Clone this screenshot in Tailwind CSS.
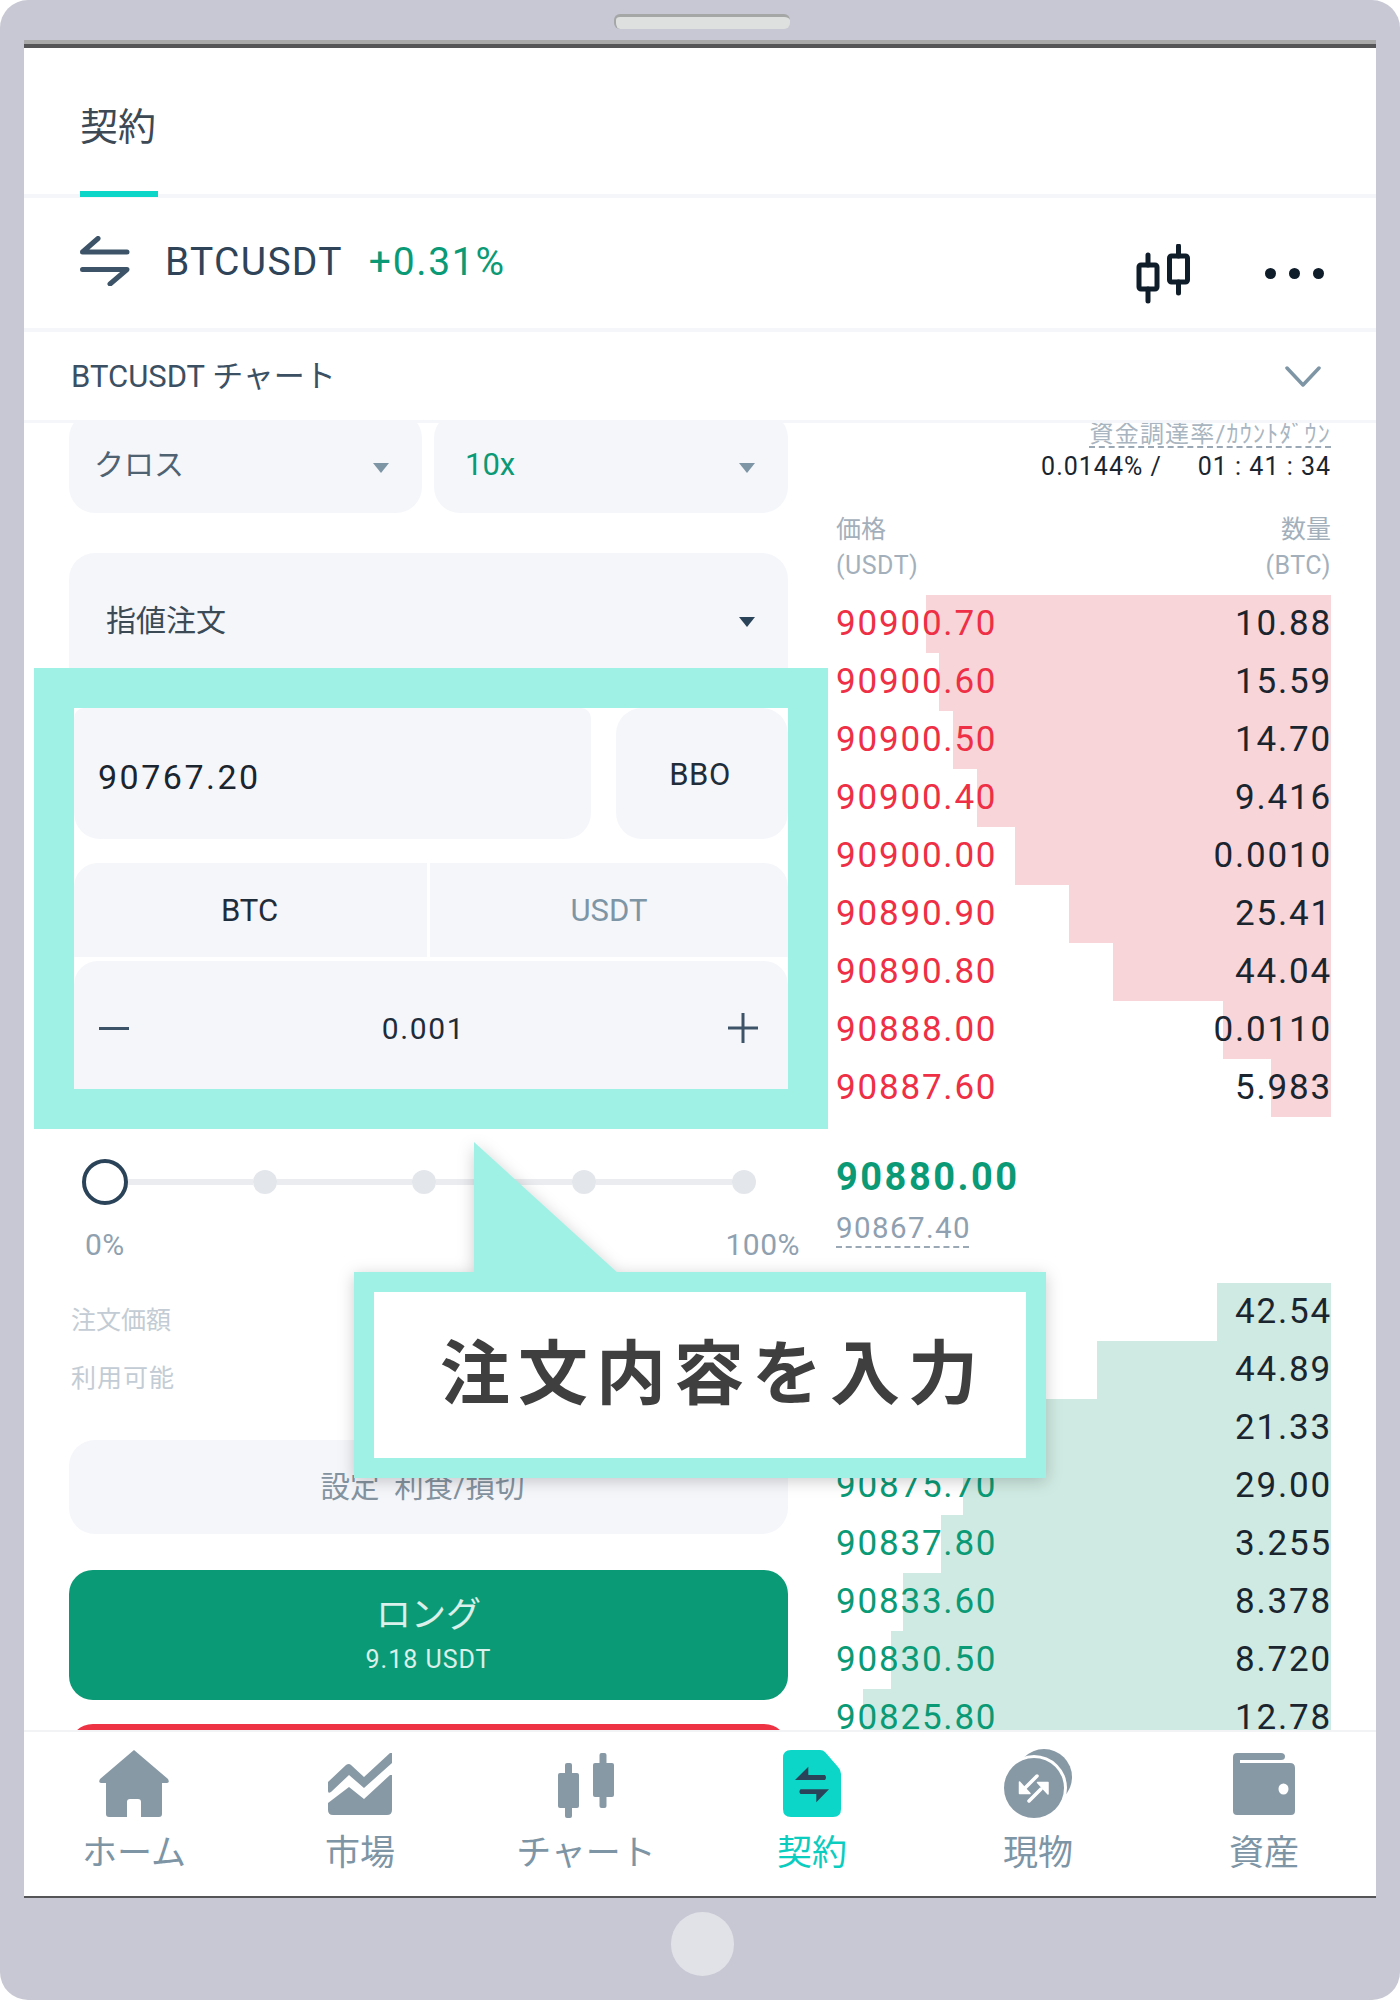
<!DOCTYPE html>
<html lang="ja">
<head>
<meta charset="utf-8">
<script src="https://cdn.jsdelivr.net/npm/@tailwindcss/browser@4"></script>
</head>
<body class="bg-white">
<div class="relative w-[1400px] h-[2000px] overflow-hidden rounded-[28px] bg-[#c7c8d3] font-['Roboto','Noto_Sans_CJK_JP',sans-serif]">
  <!-- top bezel -->
  <div class="h-[40px] pt-[14px] pl-[614px]">
    <div class="w-[176px] h-[15px] rounded-[6px] bg-[#dedfdf] border-t-[3px] border-l-[2px] border-[#a5a6a6]"></div>
  </div>
  <!-- screen -->
  <div class="ml-[24px] w-[1352px] bg-white flex flex-col">
    <div class="h-[4px] bg-[#a9a9a9]"></div>
    <div class="h-[4px] bg-[#555558]"></div>
    <!-- tab -->
    <div class="h-[150px] border-b-4 border-[#f5f6fa] pl-[56px]">
      <div class="w-[78px] h-[149px] border-b-[6px] border-[#0bd6c8] pt-[56px] text-[38px] leading-[46px] text-[#3d4a55]">契約</div>
    </div>
    <!-- symbol row -->
    <div class="h-[134px] border-b-4 border-[#f5f6fa] pl-[56px] pr-[52px] flex items-center">
      <svg class="w-[50px] h-[50px] -mt-[4px] shrink-0" viewBox="0 0 50 50" fill="none" stroke="#3d5468" stroke-width="5" stroke-linecap="round" stroke-linejoin="round"><path d="M47 16H2.5L18 2.5"/><path d="M2.5 33.5H47L30 48"/></svg>
      <span class="ml-[35px] -mt-[2px] text-[39px] leading-[46px] tracking-[1.3px] text-[#2f4458]">BTCUSDT</span>
      <span class="ml-[26px] -mt-[2px] text-[39px] leading-[46px] tracking-[1.7px] text-[#0a9a75]">+0.31%</span>
      <div class="ml-auto mt-[22px] flex items-center gap-[74px]">
        <svg class="w-[55px] h-[60px]" viewBox="0 0 55 60" fill="none" stroke="#0f1c2a" stroke-width="5" stroke-linecap="round"><rect x="3" y="21" width="18" height="24" rx="2"/><path d="M12 11V21M12 45V57"/><rect x="33.5" y="12" width="18" height="26" rx="2"/><path d="M42.5 2V12M42.5 38V49"/></svg>
        <div class="flex gap-[13px] mt-[-2px]">
          <div class="w-[11px] h-[11px] rounded-full bg-[#0f1c2a]"></div>
          <div class="w-[11px] h-[11px] rounded-full bg-[#0f1c2a]"></div>
          <div class="w-[11px] h-[11px] rounded-full bg-[#0f1c2a]"></div>
        </div>
      </div>
    </div>
    <!-- chart row -->
    <div class="h-[91px] border-b-[3px] border-[#f5f6fa] pl-[47px] pr-[55px] flex items-center justify-between">
      <span class="mt-[2px] text-[31px] leading-[40px] text-[#3c5063]">BTCUSDT チャート</span>
      <svg class="mt-[2px] w-[36px] h-[22px]" viewBox="0 0 36 22" fill="none" stroke="#7d95a5" stroke-width="3.5" stroke-linecap="round" stroke-linejoin="round"><path d="M2 2L18 19L34 2"/></svg>
    </div>
    <!-- main -->
    <div class="h-[1307px] overflow-hidden flex">
      <!-- form -->
      <div class="ml-[45px] w-[719px] shrink-0">
        <div class="-mt-[11px] flex gap-[12px]">
          <div class="w-[353px] h-[101px] rounded-[26px] bg-[#f5f6fa] flex items-center justify-between pl-[25px] pr-[33px]">
            <span class="mt-[4px] text-[30px] leading-[40px] text-[#4f6272]">クロス</span>
            <div class="mt-[10px] w-0 h-0 border-x-[8px] border-t-[10px] border-x-transparent border-t-[#7d95a5]"></div>
          </div>
          <div class="w-[354px] h-[101px] rounded-[26px] bg-[#f5f6fa] flex items-center justify-between pl-[31px] pr-[33px]">
            <span class="mt-[4px] text-[31px] leading-[40px] text-[#0a9a75]">10x</span>
            <div class="mt-[10px] w-0 h-0 border-x-[8px] border-t-[10px] border-x-transparent border-t-[#7d95a5]"></div>
          </div>
        </div>
        <div class="mt-[40px] h-[132px] rounded-t-[26px] bg-[#f5f6fa] flex items-center justify-between pl-[37px] pr-[33px]">
          <span class="mt-[3px] text-[30px] leading-[40px] text-[#3c4a56]">指値注文</span>
          <div class="mt-[5px] w-0 h-0 border-x-[8px] border-t-[10px] border-x-transparent border-t-[#2a4358]"></div>
        </div>
        <!-- highlighted fields -->
        <div class="relative -mt-[17px] -ml-[35px] w-[794px] border-[40px] border-[#9ff1e5] bg-white">
          <div class="flex justify-between">
            <div class="w-[517px] h-[131px] rounded-b-[26px] rounded-t-[10px] bg-[#f5f6fa] flex items-center pt-[6px] pl-[24px] text-[34px] leading-[40px] tracking-[2.5px] text-[#1a2530]">90767.20</div>
            <div class="w-[172px] h-[131px] rounded-[26px] bg-[#f5f6fa] flex items-center justify-center pt-[2px] pr-[4px] text-[31px] leading-[40px] tracking-[0.5px] text-[#1f2d3a]">BBO</div>
          </div>
          <div class="mt-[24px] flex gap-[3px]">
            <div class="w-[353px] h-[94px] rounded-tl-[24px] bg-[#f5f6fa] flex items-center justify-center pt-[2px] pr-[2px] text-[31px] leading-[40px] text-[#1f2d3a]">BTC</div>
            <div class="w-[358px] h-[94px] rounded-tr-[24px] bg-[#f5f6fa] flex items-center justify-center pt-[2px] text-[31px] leading-[40px] text-[#7d95a5]">USDT</div>
          </div>
          <div class="mt-[4px] h-[128px] rounded-t-[24px] bg-[#f5f6fa] flex items-center justify-between pt-[6px] pl-[25px] pr-[30px]">
            <div class="w-[30px] h-[3px] bg-[#3d5468]"></div>
            <span class="mr-[10px] mt-[2px] text-[30px] leading-[40px] tracking-[1.6px] text-[#1f2d3a]">0.001</span>
            <svg class="w-[30px] h-[30px]" viewBox="0 0 30 30" stroke="#3d5468" stroke-width="3"><path d="M0 15H30M15 0V30"/></svg>
          </div>
        </div>
        <!-- slider -->
        <div class="mt-[30px] ml-[13px] flex items-center">
          <div class="w-[46px] h-[46px] rounded-full border-[4px] border-[#2a4358] shrink-0"></div>
          <div class="w-[125px] h-[6px] bg-[#eaecf0]"></div>
          <div class="w-[24px] h-[24px] rounded-full bg-[#e3e6eb]"></div>
          <div class="w-[135px] h-[6px] bg-[#eaecf0]"></div>
          <div class="w-[24px] h-[24px] rounded-full bg-[#e3e6eb]"></div>
          <div class="w-[136px] h-[6px] bg-[#eaecf0]"></div>
          <div class="w-[24px] h-[24px] rounded-full bg-[#e3e6eb]"></div>
          <div class="w-[136px] h-[6px] bg-[#eaecf0]"></div>
          <div class="w-[24px] h-[24px] rounded-full bg-[#e3e6eb]"></div>
        </div>
        <div class="mt-[24px] pl-[16px] -mr-[12px] flex justify-between text-[30px] leading-[32px] tracking-[0.5px] text-[#8fa1b0]">
          <span>0%</span><span>100%</span>
        </div>
        <div class="mt-[44px] ml-[2px] text-[25px] leading-[32px] text-[#c3ccd4]">注文価額</div>
        <div class="mt-[26px] ml-[2px] text-[25px] leading-[32px] tracking-[1px] text-[#c3ccd4]">利用可能</div>
        <div class="mt-[45px] h-[94px] rounded-[26px] bg-[#f5f6fa] flex items-center justify-center pr-[12px] text-[29.5px] leading-[36px] text-[#8493a0]">設定 &nbsp;利食/損切</div>
        <div class="mt-[36px] h-[130px] rounded-[24px] bg-[#0a9a75] flex flex-col items-center text-white/85">
          <span class="mt-[26px] text-[35px] leading-[40px]">ロング</span>
          <span class="mt-[9px] text-[25px] leading-[30px] tracking-[1px]">9.18 USDT</span>
        </div>
        <div class="mt-[24px] h-[130px] rounded-[24px] bg-[#ee3344]"></div>
      </div>
      <!-- order book -->
      <div class="ml-[48px] w-[495px] shrink-0">
        <div class="flex justify-end">
          <span class="h-[25px] leading-[22px] text-[24px] tracking-[1.2px] whitespace-nowrap border-b-2 border-dashed border-[#9aa8b5] text-[#a9b5c0]">資金調達率/ｶｳﾝﾄﾀﾞｳﾝ</span>
        </div>
        <div class="mt-[4px] flex justify-end gap-[36px] text-[25px] leading-[30px] tracking-[1px] text-[#1a2530]">
          <span>0.0144% /</span><span>01 : 41 : 34</span>
        </div>
        <div class="mt-[29px] flex justify-between text-[25px] leading-[37px] text-[#a3b0bb]">
          <span>価格</span><span>数量</span>
        </div>
        <div class="-mt-[1px] flex justify-between text-[25px] leading-[37px] tracking-[0.5px] text-[#a3b0bb]">
          <span>(USDT)</span><span>(BTC)</span>
        </div>
        <div class="mt-[11px] text-[35px] leading-[57px] tracking-[1.8px]">
          <div class="relative h-[58px] flex justify-between -mr-[1px]"><div class="absolute inset-y-0 right-[1px] bg-[#f8d5d9]" style="width:405px"></div><span class="relative text-[#ee2f45]">90900.70</span><span class="relative text-[#1a2530]">10.88</span></div>
          <div class="relative h-[58px] flex justify-between -mr-[1px]"><div class="absolute inset-y-0 right-[1px] bg-[#f8d5d9]" style="width:392px"></div><span class="relative text-[#ee2f45]">90900.60</span><span class="relative text-[#1a2530]">15.59</span></div>
          <div class="relative h-[58px] flex justify-between -mr-[1px]"><div class="absolute inset-y-0 right-[1px] bg-[#f8d5d9]" style="width:378px"></div><span class="relative text-[#ee2f45]">90900.50</span><span class="relative text-[#1a2530]">14.70</span></div>
          <div class="relative h-[58px] flex justify-between -mr-[1px]"><div class="absolute inset-y-0 right-[1px] bg-[#f8d5d9]" style="width:354px"></div><span class="relative text-[#ee2f45]">90900.40</span><span class="relative text-[#1a2530]">9.416</span></div>
          <div class="relative h-[58px] flex justify-between -mr-[1px]"><div class="absolute inset-y-0 right-[1px] bg-[#f8d5d9]" style="width:316px"></div><span class="relative text-[#ee2f45]">90900.00</span><span class="relative text-[#1a2530]">0.0010</span></div>
          <div class="relative h-[58px] flex justify-between -mr-[1px]"><div class="absolute inset-y-0 right-[1px] bg-[#f8d5d9]" style="width:262px"></div><span class="relative text-[#ee2f45]">90890.90</span><span class="relative text-[#1a2530]">25.41</span></div>
          <div class="relative h-[58px] flex justify-between -mr-[1px]"><div class="absolute inset-y-0 right-[1px] bg-[#f8d5d9]" style="width:218px"></div><span class="relative text-[#ee2f45]">90890.80</span><span class="relative text-[#1a2530]">44.04</span></div>
          <div class="relative h-[58px] flex justify-between -mr-[1px]"><div class="absolute inset-y-0 right-[1px] bg-[#f8d5d9]" style="width:108px"></div><span class="relative text-[#ee2f45]">90888.00</span><span class="relative text-[#1a2530]">0.0110</span></div>
          <div class="relative h-[58px] flex justify-between -mr-[1px]"><div class="absolute inset-y-0 right-[1px] bg-[#f8d5d9]" style="width:60px"></div><span class="relative text-[#ee2f45]">90887.60</span><span class="relative text-[#1a2530]">5.983</span></div>
        </div>
        <div class="mt-[35px] text-[38px] leading-[50px] tracking-[2.5px] font-bold text-[#0a9a75]">90880.00</div>
        <div class="mt-[8px] h-[38px] w-[133px] whitespace-nowrap text-[29.5px] leading-[37px] tracking-[1.4px] border-b-2 border-dashed border-[#9aa8b5] text-[#8fa0b0]">90867.40</div>
        <div class="mt-[35px] text-[35px] leading-[57px] tracking-[1.8px]">
          <div class="relative h-[58px] flex justify-between -mr-[1px]"><div class="absolute inset-y-0 right-[1px] bg-[#cfeae2]" style="width:114px"></div><span></span><span class="relative text-[#1a2530]">42.54</span></div>
          <div class="relative h-[58px] flex justify-between -mr-[1px]"><div class="absolute inset-y-0 right-[1px] bg-[#cfeae2]" style="width:234px"></div><span></span><span class="relative text-[#1a2530]">44.89</span></div>
          <div class="relative h-[58px] flex justify-between -mr-[1px]"><div class="absolute inset-y-0 right-[1px] bg-[#cfeae2]" style="width:340px"></div><span></span><span class="relative text-[#1a2530]">21.33</span></div>
          <div class="relative h-[58px] flex justify-between -mr-[1px]"><div class="absolute inset-y-0 right-[1px] bg-[#cfeae2]" style="width:368px"></div><span class="relative text-[#0a9a75]">90875.70</span><span class="relative text-[#1a2530]">29.00</span></div>
          <div class="relative h-[58px] flex justify-between -mr-[1px]"><div class="absolute inset-y-0 right-[1px] bg-[#cfeae2]" style="width:390px"></div><span class="relative text-[#0a9a75]">90837.80</span><span class="relative text-[#1a2530]">3.255</span></div>
          <div class="relative h-[58px] flex justify-between -mr-[1px]"><div class="absolute inset-y-0 right-[1px] bg-[#cfeae2]" style="width:428px"></div><span class="relative text-[#0a9a75]">90833.60</span><span class="relative text-[#1a2530]">8.378</span></div>
          <div class="relative h-[58px] flex justify-between -mr-[1px]"><div class="absolute inset-y-0 right-[1px] bg-[#cfeae2]" style="width:440px"></div><span class="relative text-[#0a9a75]">90830.50</span><span class="relative text-[#1a2530]">8.720</span></div>
          <div class="relative h-[58px] flex justify-between -mr-[1px]"><div class="absolute inset-y-0 right-[1px] bg-[#cfeae2]" style="width:468px"></div><span class="relative text-[#0a9a75]">90825.80</span><span class="relative text-[#1a2530]">12.78</span></div>
        </div>
      </div>
    </div>
    <!-- bottom nav -->
    <div class="relative h-[168px] bg-white border-t-2 border-t-[#f1f3f5] border-b-2 border-b-[#555558]">
      <div class="-ml-[3px] grid grid-cols-[repeat(6,226px)] text-[35px] leading-[40px] text-[#7d95a5]">
        <div class="flex flex-col items-center">
          <div class="h-[102px] pt-[18px]"><svg class="w-[70px] h-[67px]" viewBox="0 0 70 67" fill="#8899a6"><path d="M35 0L69 29Q71 33 68 33H63V64Q63 67 60 67H42V52Q42 49 39 49H31Q28 49 28 52V67H10Q7 67 7 64V33H2Q-1 33 1 29Z"/></svg></div>
          <span>ホーム</span>
        </div>
        <div class="flex flex-col items-center">
          <div class="h-[102px] pt-[21px]"><svg class="w-[64px] h-[62px]" viewBox="0 0 64 62" fill="#8899a6"><path d="M0 29L18 12Q21 10 23 12L36 24L62 0L64 0V10L36 35L21 22L3 39Q0 41 0 38Z"/><path d="M0 50L21 34L36 46L62 22H64V57Q64 62 59 62H5Q0 62 0 57Z"/></svg></div>
          <span>市場</span>
        </div>
        <div class="flex flex-col items-center">
          <div class="h-[102px] pt-[21px]"><svg class="w-[56px] h-[65px]" viewBox="0 0 56 65" fill="#8899a6"><rect x="0" y="20" width="21" height="35" rx="2"/><rect x="7" y="10" width="7" height="55" rx="2"/><rect x="35" y="10" width="21" height="34" rx="2"/><rect x="41.5" y="0" width="7" height="55" rx="2"/></svg></div>
          <span>チャート</span>
        </div>
        <div class="flex flex-col items-center text-[#0bcdbf]">
          <div class="h-[102px] pt-[18px]"><svg class="w-[58px] h-[67px]" viewBox="0 0 58 67"><path fill="#0bd6c8" d="M8 0H37Q40 0 42 2L55 17Q58 20 58 24V59Q58 67 50 67H8Q0 67 0 59V8Q0 0 8 0Z"/><path fill="#2a4358" d="M12 30L25.3 16.7V25H42Q44 27.5 42 30Z"/><path fill="#2a4358" d="M46 39.3L33.3 52.3V44H17.5Q15.3 41.7 17.5 39.3Z"/></svg></div>
          <span>契約</span>
        </div>
        <div class="flex flex-col items-center">
          <div class="h-[102px] pt-[17px]"><svg class="w-[70px] h-[69px]" viewBox="0 0 70 69"><circle cx="41" cy="28" r="28" fill="#8899a6"/><circle cx="31" cy="39" r="33" fill="#fff"/><circle cx="31" cy="39" r="30" fill="#8899a6"/><path fill="none" stroke="#fff" stroke-width="3.5" stroke-linecap="round" d="M34 27L22 39M26 52L38 40"/><path fill="#fff" stroke="#fff" stroke-width="1.5" stroke-linejoin="round" d="M16.5 33L27 44.5H16.5ZM45 45L34.5 33.5H45Z"/></svg></div>
          <span>現物</span>
        </div>
        <div class="flex flex-col items-center">
          <div class="h-[102px] pt-[21px]"><svg class="w-[62px] h-[62px]" viewBox="0 0 62 62"><path fill="#8899a6" d="M4 0H48Q52 0 52 3.5Q52 7 48 7H7V10H57Q62 10 62 15V58Q62 62 58 62H4Q0 62 0 58V4Q0 0 4 0Z"/><ellipse cx="50.5" cy="36" rx="5" ry="5.5" fill="#fff"/></svg></div>
          <span>資産</span>
        </div>
      </div>
    </div>
  </div>
  <!-- home button -->
  <div class="absolute left-[671px] top-[1912px] w-[63px] h-[64px] rounded-full bg-[#e1e2e8]"></div>
  <!-- callout -->
  <div class="absolute left-[354px] top-[1142px] w-[692px] h-[336px] drop-shadow-[0_3px_8px_rgba(0,0,0,0.2)]">
    <svg class="absolute left-[120px] top-0 w-[146px] h-[132px]" viewBox="0 0 146 132" fill="#9ff1e5"><path d="M0 0L145 132H0Z"/></svg>
    <div class="relative mt-[130px] h-[206px] border-[20px] border-[#9ff1e5] bg-white flex items-center justify-center pl-[26px] text-[70px] leading-[80px] tracking-[8px] font-bold text-[#3f3f3f]">注文内容を入力</div>
  </div>
</div>
</body>
</html>
